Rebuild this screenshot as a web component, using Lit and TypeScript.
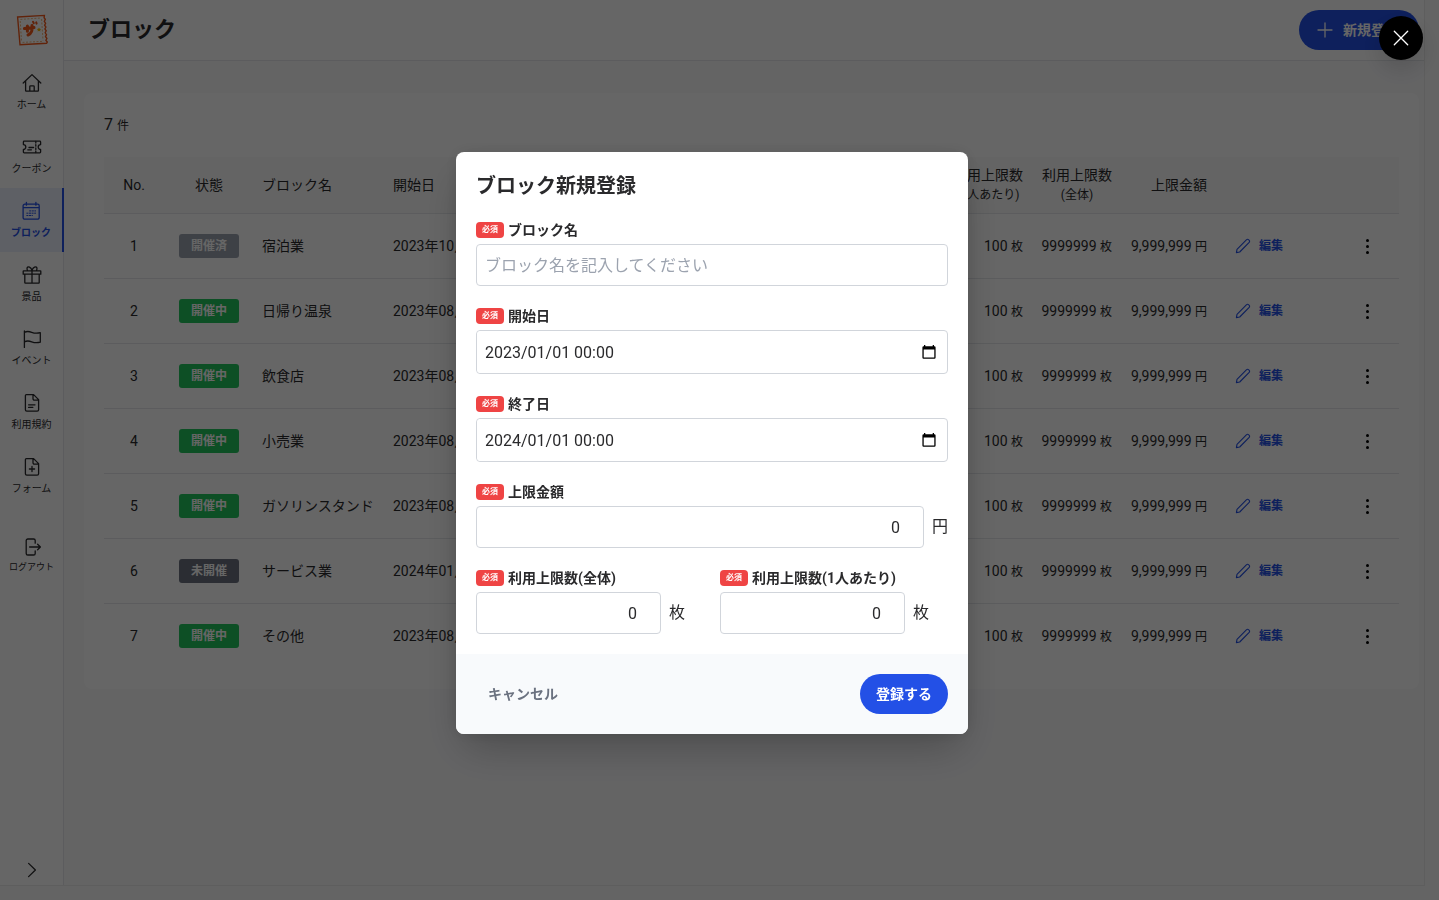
import { LitElement, html, css, svg } from "lit";
import { customElement, property } from "lit/decorators.js";
import { classMap } from "lit/directives/class-map.js";

const icons: Record<string, unknown> = {
  home: svg`<path d="M1.200 10 10 1.600l8.800 8.400M3.600 8v9.400a.8.8 0 0 0 .8.8h11.200a.8.8 0 0 0 .8-.8V8M7.800 18v-4.400a.8.8 0 0 1 .8-.8h2.800a.8.8 0 0 1 .8.8V18"/>`,
  ticket: svg`<path d="M2.200 4.200h15.600a.8.8 0 0 1 .8.8v2.600a2.400 2.400 0 0 0 0 4.800V15a.8.8 0 0 1-.8.8H2.200a.8.8 0 0 1-.8-.8v-2.600a2.400 2.400 0 0 0 0-4.800V5a.8.8 0 0 1 .8-.8z"/><path d="M7 10.500h4.600M5.800 12.800h3.600M13.800 4.500v1.600M13.800 7.600v1.600M13.800 10.800v1.600M13.800 14v1.600"/>`,
  calendar: svg`<path d="M3.900 3.200h12.700a1.600 1.600 0 0 1 1.600 1.600v11.600a1.800 1.800 0 0 1-1.800 1.800H3.900a1.800 1.800 0 0 1-1.800-1.800V5a1.800 1.800 0 0 1 1.800-1.800zM2.100 6.600h16.100M5.400 1.400v2.800M14.900 1.400v2.800"/><path d="M8.200 9.900h6.800M5.400 12.200h9.600M5.400 14.500h6.400" stroke-width="1" stroke-linecap="butt" stroke-dasharray="2 .6"/>`,
  gift: svg`<path d="M1.600 5.800h16.800a.4.4 0 0 1 .4.4v3H1.200v-3a.4.4 0 0 1 .4-.4zM2.800 9.200v8.400a.6.6 0 0 0 .6.600h13.200a.6.6 0 0 0 .6-.6V9.200M10 5.800v12.400M10 5.200C8.800 2.200 6 1 5.200 2.600c-.6 1.400.4 3.200.4 3.200M10 5.200c1.200-3 4-4.200 4.800-2.600.6 1.400-.4 3.200-.4 3.200"/>`,
  flag: svg`<path d="M2.400 18.400V2M2.400 3.300c2.600-1.300 5-.9 7.300 0 2.600 1 5.200 1.300 8.600.4v9.500c-3.400.9-6 .6-8.600-.4-2.300-.9-4.700-1.300-7.300 0"/>`,
  doc: svg`<path d="M4.400 1.600h7.200l5 5v10.200a1.400 1.400 0 0 1-1.400 1.400H4.800a1.400 1.400 0 0 1-1.400-1.400V2.600a1 1 0 0 1 1-1zM11 1.800v4a1.400 1.400 0 0 0 1.400 1.400h4M6.600 14.400h4.200M6.600 11.800H13"/>`,
  docPlus: svg`<path d="M4.400 1.600h7.200l5 5v10.200a1.400 1.400 0 0 1-1.400 1.400H4.800a1.400 1.400 0 0 1-1.400-1.400V2.600a1 1 0 0 1 1-1zM11 1.800v4a1.400 1.400 0 0 0 1.400 1.400h4M10 9.400v5.200M7.400 12h5.200"/>`,
  logout: svg`<path d="M13.200 6.200V3.600a1.600 1.600 0 0 0-1.600-1.600H5.800a1.600 1.600 0 0 0-1.600 1.600v12.800A1.600 1.600 0 0 0 5.800 18h5.800a1.600 1.600 0 0 0 1.600-1.600v-2.600M7.600 10h10.800M15.600 7.200l2.800 2.800-2.800 2.800"/>`,
  chevron: svg`<path d="M6.600 3.400l6.800 6.600-6.800 6.600"/>`,
  plus: svg`<path d="M10 3v14M3 10h14"/>`,
  close: svg`<path d="M3.300 3.300l13.400 13.400M16.700 3.300L3.300 16.700"/>`,
  pencil: svg`<path d="M3.400 16.600l.6-3.300L13.600 3.700a1.300 1.300 0 0 1 1.900 0l.7.700a1.300 1.300 0 0 1 0 1.900L6.700 16z" stroke-width="1.100"/>`,
};

const icon = (name: string) => html`<svg
  class="icon"
  viewBox="0 0 20 20"
  fill="none"
  stroke="currentColor"
  stroke-width="1.300"
  stroke-linecap="round"
  stroke-linejoin="round"
  aria-hidden="true"
>${icons[name]}</svg>`;

const base = css`
  * { box-sizing: border-box; }
  button, input { font: inherit; color: inherit; }
  button { border: 0; background: none; padding: 0; cursor: pointer; }
  a { color: inherit; text-decoration: none; }
  .icon { width: 20px; height: 20px; flex: none; display: block; }
`;

@customElement("side-nav")
class SideNav extends LitElement {
  static styles = [base, css`
    :host { display: flex; flex-direction: column; align-items: stretch; background: #fff; border-right: 1px solid #e5e7eb; }
    .logo { height: 60px; display: grid; place-items: center; }
    .logo svg { width: 32px; height: 32px; }
    .items { display: flex; flex-direction: column; }
    .item { height: 64px; padding-top: 2px; display: flex; flex-direction: column; align-items: center; justify-content: center; gap: 4px; font-size: 10px; line-height: 16px; white-space: nowrap; }
    .item.active { color: #2350e6; background: #eaeffc; font-weight: 700; border-right: 2px solid #2350e6; margin-right: -1px; }
    .logout { margin-top: 16px; }
    .logout .item { font-size: 9px; gap: 2px; padding-top: 0; }
    .expand { margin-top: auto; height: 30px; display: grid; place-items: center; }
  `];

  private item(name: string, label: string, active = false) {
    return html`<a href="#" class=${classMap({ item: true, active })} aria-current=${active ? "page" : "false"}>${icon(name)}<span>${label}</span></a>`;
  }

  render() {
    return html`
      <a class="logo" href="#" aria-label="トップ">
        <svg viewBox="0 0 32 32" fill="none" aria-hidden="true">
          <path d="M1.600 3 28.400 1.400l-.3 2.300 1.200 1.700-1 2 1.300 1.800-1 2 1.300 1.800-1 2 1.300 1.800-1 2 1.300 1.900-1 1.900 1.400 1.800-1 2 1.400 1.700L30.600 29.200 4 30.800z" stroke="#f2591b" stroke-width="1.400"/>
          <path d="M4.400 5.400 25.400 4M25.600 5l1.400 21.400M26 27.400 6.400 28.400M4.200 7l1.400 21" stroke="#f3b77a" stroke-width="1" stroke-dasharray="2 1.500"/>
          <path d="M8.400 14.600l9.600-1M11.400 12v5.200M16 11.600c.8 5.200-.3 8-4 9.400" stroke="#f2591b" stroke-width="3" stroke-linecap="round"/>
          <path d="M17 7.800l.8 1.400M20.200 8.400l.4 1.200" stroke="#f2591b" stroke-width="2" stroke-linecap="round"/>
          <path d="M23 13.400l.7 1.400 1.500.2-1.100 1 .3 1.500-1.400-.7-1.400.7.300-1.500-1.100-1 1.500-.2z" fill="#f5b800"/>
        </svg>
      </a>
      <nav class="items">
        ${this.item("home", "ホーム")}
        ${this.item("ticket", "クーポン")}
        ${this.item("calendar", "ブロック", true)}
        ${this.item("gift", "景品")}
        ${this.item("flag", "イベント")}
        ${this.item("doc", "利用規約")}
        ${this.item("docPlus", "フォーム")}
      </nav>
      <div class="logout">${this.item("logout", "ログアウト")}</div>
      <button class="expand" aria-label="メニューを開く">${icon("chevron")}</button>
    `;
  }
}

type Status = "done" | "open" | "soon";
const statusLabels: Record<Status, string> = { done: "開催済", open: "開催中", soon: "未開催" };
const blocks: { status: Status; name: string; start: string }[] = [
  { status: "done", name: "宿泊業", start: "2023年10月" },
  { status: "open", name: "日帰り温泉", start: "2023年08月" },
  { status: "open", name: "飲食店", start: "2023年08月" },
  { status: "open", name: "小売業", start: "2023年08月" },
  { status: "open", name: "ガソリンスタンド", start: "2023年08月" },
  { status: "soon", name: "サービス業", start: "2024年01月" },
  { status: "open", name: "その他", start: "2023年08月" },
];

@customElement("block-table")
class BlockTable extends LitElement {
  static styles = [base, css`
    :host { display: block; background: #fff; border-radius: 8px; padding: 20px; }
    .count { height: 24px; margin: 0 0 20px; font-size: 16px; line-height: 24px; }
    .small { font-size: 12px; line-height: 20px; }
    table { width: 100%; border-collapse: separate; border-spacing: 0; table-layout: fixed; font-size: 14px; line-height: 20px; }
    th, td { padding: 0 8px; text-align: left; white-space: nowrap; border-bottom: 1px solid #e5e7eb; }
    th { height: 57px; font-weight: 400; background: #fafafa; }
    td { height: 65px; }
    tbody tr:last-child td { border-bottom-color: transparent; }
    th.center, td.center { text-align: center; }
    th.right, td.right { text-align: right; }
    .stack { display: inline-block; vertical-align: middle; text-align: center; }
    .stack .small { display: block; }
    .c-no { width: 60px; }
    .c-status { width: 90px; }
    .c-name { width: 131px; }
    .c-each { width: 86px; }
    .c-total { width: 89px; }
    .c-price { width: 95px; }
    .c-edit { width: 120px; }
    .c-menu { width: 64px; }
    .badge { display: block; width: 60px; margin: 0 auto; border-radius: 3px; color: #fff; font-size: 12px; font-weight: 700; line-height: 24px; text-align: center; }
    .done { background: #9ca3af; }
    .open { background: #22c55e; }
    .soon { background: #6b7280; }
    .edit { display: flex; align-items: center; gap: 6px; padding-left: 10px; color: #2350e6; font-size: 12px; font-weight: 700; }
    .menu { display: inline-grid; vertical-align: middle; gap: 3px; padding: 4px 8px; }
    .dot { width: 3px; height: 3px; border-radius: 50%; background: #000; }
  `];

  render() {
    return html`
      <p class="count">7 <span class="small">件</span></p>
      <table>
        <colgroup>
          <col class="c-no"><col class="c-status"><col class="c-name"><col>
          <col class="c-each"><col class="c-total"><col class="c-price"><col class="c-edit"><col class="c-menu">
        </colgroup>
        <thead>
          <tr>
            <th class="center">No.</th>
            <th class="center">状態</th>
            <th>ブロック名</th>
            <th>開始日</th>
            <th class="right"><span class="stack">利用上限数<span class="small">(1人あたり)</span></span></th>
            <th class="right"><span class="stack">利用上限数<span class="small">(全体)</span></span></th>
            <th class="right">上限金額</th>
            <th></th>
            <th></th>
          </tr>
        </thead>
        <tbody>
          ${blocks.map((b, i) => html`<tr>
            <td class="center">${i + 1}</td>
            <td class="center"><span class="badge ${b.status}">${statusLabels[b.status]}</span></td>
            <td>${b.name}</td>
            <td>${b.start}</td>
            <td class="right">100 <span class="small">枚</span></td>
            <td class="right">9999999 <span class="small">枚</span></td>
            <td class="right">9,999,999 <span class="small">円</span></td>
            <td><button class="edit">${icon("pencil")}編集</button></td>
            <td class="center"><button class="menu" aria-label="操作"><i class="dot"></i><i class="dot"></i><i class="dot"></i></button></td>
          </tr>`)}
        </tbody>
      </table>
    `;
  }
}

@customElement("block-form")
class BlockForm extends LitElement {
  static styles = [base, css`
    :host { display: block; }
    .panel { background: #fff; border-radius: 8px; overflow: hidden; box-shadow: 0 20px 40px -8px rgba(0, 0, 0, 0.25), 0 0 16px rgba(0, 0, 0, 0.1); }
    .body { display: flex; flex-direction: column; gap: 20px; padding: 20px; }
    h2 { margin: 0; font-size: 20px; line-height: 28px; font-weight: 700; }
    .field { display: flex; flex-direction: column; gap: 4px; min-width: 0; }
    label { display: flex; align-items: center; gap: 4px; font-size: 14px; line-height: 20px; font-weight: 700; white-space: nowrap; }
    .required { padding: 0 6px; border-radius: 4px; background: #ef4444; color: #fff; font-size: 8px; line-height: 16px; }
    .control { display: flex; align-items: center; gap: 8px; }
    input { flex: 1; min-width: 0; height: 42px; padding: 8px; border: 1px solid #d1d5db; border-radius: 4px; background: #fff; font-size: 16px; line-height: 24px; }
    input::placeholder { color: #9ca3af; opacity: 1; }
    input[type="number"] { text-align: right; }
    .short input { flex: none; width: 185px; }
    .pair { display: grid; grid-template-columns: 1fr 1fr; gap: 16px; }
    .date { border: 1px solid #d1d5db; border-radius: 4px; height: 44px; padding-right: 8px; }
    .date input { border: 0; }
    .date svg { width: 20px; height: 20px; display: block; }
    .foot { display: flex; align-items: center; justify-content: space-between; padding: 20px; background: #f8fafc; font-size: 14px; line-height: 20px; font-weight: 700; }
    .cancel { height: 40px; padding: 0 12px; color: #6b7280; }
    .submit { height: 40px; padding: 0 16px; border-radius: 20px; background: #2350e6; color: #fff; }
  `];

  private label(id: string, text: string) {
    return html`<label for=${id}><span class="required">必須</span>${text}</label>`;
  }

  private date(id: string, text: string, value: string) {
    return html`<div class="field">
      ${this.label(id, text)}
      <div class="control date">
        <input id=${id} type="text" .value=${value}>
        <button type="button" aria-label="日付を選択">
          <svg viewBox="0 0 20 20" aria-hidden="true"><path fill="#000" fill-rule="evenodd" d="M5 3h1.300v1.200h7.400V3H15v1.200h.4a1.200 1.200 0 0 1 1.200 1.200v10.100a1.200 1.200 0 0 1-1.200 1.200H4.600a1.200 1.200 0 0 1-1.200-1.200V5.400a1.200 1.200 0 0 1 1.200-1.200H5zM4.700 7.600v7.800h10.600V7.600z"/></svg>
        </button>
      </div>
    </div>`;
  }

  private amount(id: string, text: string, unit: string, short = false) {
    return html`<div class="field">
      ${this.label(id, text)}
      <div class=${classMap({ control: true, short })}><input id=${id} type="number" value="0"><span>${unit}</span></div>
    </div>`;
  }

  render() {
    return html`
      <form class="panel" role="dialog" aria-labelledby="title" @submit=${(e: Event) => e.preventDefault()}>
        <div class="body">
          <h2 id="title">ブロック新規登録</h2>
          <div class="field">
            ${this.label("name", "ブロック名")}
            <div class="control"><input id="name" type="text" placeholder="ブロック名を記入してください"></div>
          </div>
          ${this.date("start", "開始日", "2023/01/01 00:00")}
          ${this.date("end", "終了日", "2024/01/01 00:00")}
          ${this.amount("price", "上限金額", "円")}
          <div class="pair">
            ${this.amount("total", "利用上限数(全体)", "枚", true)}
            ${this.amount("each", "利用上限数(1人あたり)", "枚", true)}
          </div>
        </div>
        <div class="foot">
          <button type="button" class="cancel">キャンセル</button>
          <button type="submit" class="submit">登録する</button>
        </div>
      </form>
    `;
  }
}

@customElement("app-root")
class AppRoot extends LitElement {
  @property({ type: String }) heading = "ブロック";

  static styles = [base, css`
    :host { display: block; color: #2a2a2c; font-family: Roboto, "Noto Sans CJK JP", sans-serif; font-size: 16px; line-height: 24px; }
    .frame { display: grid; grid-template: minmax(0, 1fr) 15px / minmax(0, 1fr) 15px; height: 100vh; background: #fafafa; }
    .page { display: grid; grid-template-columns: 64px minmax(0, 1fr); }
    .track-y { border-left: 1px solid #ebebeb; }
    .track-x { border-top: 1px solid #ebebeb; margin-right: -1px; }
    .main { display: flex; flex-direction: column; background: #f9fafb; }
    .top { display: flex; align-items: center; justify-content: space-between; height: 61px; padding: 0 5px 0 24px; background: #fff; border-bottom: 1px solid #e5e7eb; }
    h1 { margin: 0; font-size: 22px; line-height: 32px; font-weight: 700; }
    .new { display: flex; align-items: center; gap: 8px; height: 40px; padding: 0 20px 0 16px; border-radius: 20px; background: #2350e6; color: #fff; font-size: 14px; line-height: 20px; font-weight: 700; }
    .content { padding: 32px 5px 20px 20px; }
    .overlay { position: fixed; inset: 0; z-index: 10; display: grid; place-items: center; padding: 0 15px 14px 0; background: rgba(0, 0, 0, 0.6); }
    block-form { width: 100%; max-width: 512px; }
    .close { position: fixed; top: 16px; right: 16px; width: 44px; height: 44px; border-radius: 50%; display: grid; place-items: center; background: #000; color: #fff; box-shadow: 0 10px 24px rgba(0, 0, 0, 0.15); }
  `];

  render() {
    return html`
      <div class="frame">
        <div class="page">
          <side-nav></side-nav>
          <main class="main">
            <header class="top">
              <h1>${this.heading}</h1>
              <button class="new">${icon("plus")}新規登録</button>
            </header>
            <div class="content"><block-table></block-table></div>
          </main>
        </div>
        <div class="track-y"></div>
        <div class="track-x"></div>
      </div>
      <div class="overlay">
        <block-form></block-form>
        <button class="close" aria-label="閉じる">${icon("close")}</button>
      </div>
    `;
  }
}
